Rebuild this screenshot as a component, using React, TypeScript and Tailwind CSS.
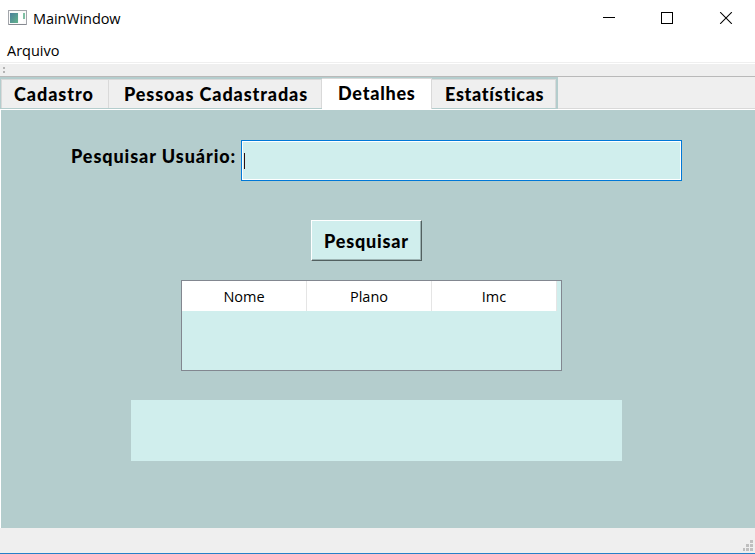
import React from "react";

const ui = "font-['Open_Sans','Noto_Sans',sans-serif] text-black whitespace-nowrap";
const display = "font-['Lato',sans-serif] font-black text-black whitespace-nowrap";

function TitleBar() {
  return (
    <header className="flex h-9 items-center bg-white pl-2">
      <svg width="19" height="16" viewBox="0 0 19 16" shapeRendering="crispEdges">
        <defs>
          <linearGradient id="pane" x1="0" y1="0" x2="1" y2="1">
            <stop offset="0" stopColor="#4a7f9c" />
            <stop offset="1" stopColor="#62b38b" />
          </linearGradient>
        </defs>
        <rect x="0.5" y="0.5" width="18" height="14" fill="#fafafa" stroke="#a3a6ab" />
        <rect x="2" y="3" width="8" height="10" fill="url(#pane)" />
        <rect x="11" y="3" width="4" height="10" fill="#ffffff" />
        <rect x="15" y="3" width="2" height="6" fill="#7fc0a4" />
        <rect x="1" y="14" width="17" height="1" fill="#858990" />
      </svg>
      <span className={`${ui} ml-1.5 pt-0.5 text-[14.5px] leading-5 tracking-[-0.1px]`}>MainWindow</span>
      <div className="ml-auto flex pr-[22px]">
        <svg width="130" height="12" viewBox="0 0 130 12" fill="none" stroke="#000">
          <path d="M0 5.5H12" shapeRendering="crispEdges" />
          <path d="M58.5 .5h11v11h-11z" shapeRendering="crispEdges" />
          <path d="M117.2.2l11.6 11.6M128.8.2L117.2 11.8" strokeWidth="1.1" />
        </svg>
      </div>
    </header>
  );
}

function Tabs() {
  const tab = `${display} flex h-[29px] items-center border-t border-r border-[#d9d9d9] bg-[#efefef] text-lg leading-6`;
  return (
    <nav className="flex h-8 items-start bg-[#efefef]">
      <div className="flex h-8 w-[558px] items-start bg-[#b4cdcd] pl-px">
        <div className={`${tab} mt-0.5 w-[108px] border-l pl-3`}>
          <span className="tracking-[0.95px]">Cadastro</span>
        </div>
        <div className={`${tab} mt-0.5 w-[213px] pl-[15px]`}>
          <span className="tracking-[0.9px]">Pessoas Cadastradas</span>
        </div>
        <div className={`${display} mt-px flex h-[31px] w-[110px] items-center border-t border-r border-[#d9d9d9] bg-white pb-0.5 pl-4 text-lg leading-6`}>
          <span className="tracking-[0.75px]">Detalhes</span>
        </div>
        <div className={`${tab} mt-0.5 w-[124px] pl-[13px]`}>
          <span className="tracking-[0.7px]">Estatísticas</span>
        </div>
      </div>
      <div className="h-8 flex-1 border-b border-[#d9d9d9]" />
    </nav>
  );
}

export default function App() {
  return (
    <div className="flex h-[554px] w-[755px] flex-col overflow-hidden bg-[#efefef]">
      <TitleBar />
      <div className="flex h-[26px] items-center bg-white pl-[7px] pt-1">
        <span className={`${ui} text-[14.5px] leading-5`}>Arquivo</span>
      </div>
      <div className="h-0.5 border-b border-white bg-[#efefef]" />
      <div className="flex h-[13px] items-start border-b border-[#b9b9b9] pl-[3px] pt-[3px]">
        <svg width="3" height="7" shapeRendering="crispEdges">
          <path d="M0 0h2v2H0zM0 4h2v2H0z" fill="#b4b4b4" />
        </svg>
      </div>
      <Tabs />
      <main className="h-[419px] border-l border-t border-white bg-[#b4cdcd]">
        <div className="flex pl-[70px] pt-[30px]">
          <label htmlFor="user" className={`${display} mt-1 w-[170px] text-lg leading-6`}>
            <span className="tracking-[0.93px]">Pesquisar Usuário:</span>
          </label>
          <div id="user" className="flex h-[41px] w-[441px] items-center border border-[#0078d7] bg-[#d0eeed] pl-0.5 shadow-[inset_0_0_0_1px_#fff]">
            <div className="h-4 w-px bg-[#2b0f12]" />
          </div>
        </div>
        <button className={`${display} ml-[310px] mt-[39px] flex h-[41px] w-[111px] items-center border border-b-[#526060] border-l-white border-r-[#526060] border-t-white bg-[#d0eeed] pl-3 text-lg leading-6 shadow-[inset_-1px_-1px_0_#9cb3b3]`}>
          <span className="tracking-[0.8px]">Pesquisar</span>
        </button>
        <div className="ml-[180px] mt-[19px] h-[91px] w-[381px] border border-[#828790] bg-[#d0eeed]">
          <div className={`${ui} flex h-[30px] w-[375px] text-center text-[14.5px] leading-[31px]`}>
            <div className="w-[125px] border-r border-[#e5e5e5] bg-white">Nome</div>
            <div className="w-[125px] border-r border-[#e5e5e5] bg-white">Plano</div>
            <div className="w-[125px] border-r border-[#e5e5e5] bg-white">Imc</div>
          </div>
        </div>
        <div className="ml-[130px] mt-[29px] h-[61px] w-[491px] bg-[#d0eeed]" />
      </main>
      <footer className="flex h-[26px] items-end justify-end border-b border-[#2580c8] pb-0.5 pr-0.5">
        <svg width="10" height="11" fill="#bfbfbf" shapeRendering="crispEdges">
          <path d="M7 0h3v3H7zM3 4h3v3H3zM7 4h3v3H7zM0 8h2v3H0zM3 8h3v3H3zM7 8h3v3H7z" />
        </svg>
      </footer>
    </div>
  );
}
